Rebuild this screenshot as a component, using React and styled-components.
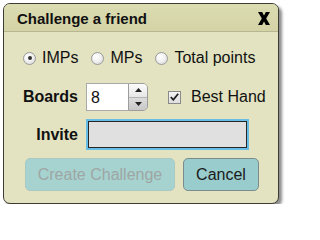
import * as React from 'react';
import styled, { createGlobalStyle } from 'styled-components';

const GlobalStyle = createGlobalStyle`
  html, body {
    margin: 0;
    padding: 0;
    background: #fff;
  }
  body {
    font-family: "Liberation Sans", Arial, sans-serif;
  }
`;

const Dialog = styled.div`
  box-sizing: border-box;
  margin: 3px 0 0 3px;
  width: 276px;
  height: 201px;
  border: 1px solid #3c3c34;
  border-radius: 7px;
  background: #e3e3c1;
  box-shadow: 3px 3px 3px rgba(0, 0, 0, 0.45);
  overflow: hidden;
  display: flex;
  flex-direction: column;
  color: #111;
`;

const Header = styled.div`
  height: 27px;
  flex: none;
  display: flex;
  align-items: center;
  justify-content: space-between;
  padding: 0 8px 0 13px;
  background: linear-gradient(#dcdcb2, #d3d3a6);
  border-bottom: 1px solid #b6b692;
`;

const Title = styled.div`
  font-size: 15px;
  font-weight: bold;
  padding-top: 1px;
`;

const CloseButton = styled.button`
  border: 0;
  background: none;
  padding: 0;
  margin: 2px 0 0;
  width: 12px;
  height: 14px;
  display: flex;
  align-items: center;
  justify-content: center;
  cursor: pointer;
`;

const Body = styled.div`
  display: flex;
  flex-direction: column;
  padding-top: 14px;
`;

const RadioRow = styled.div`
  height: 24px;
  display: flex;
  align-items: center;
  padding-left: 19px;
  font-size: 16px;
`;

const RadioLabel = styled.label`
  display: flex;
  align-items: center;
  gap: 6px;
  margin-right: 13px;
`;

const Radio = styled.input.attrs({ type: 'radio' })`
  appearance: none;
  margin: 0;
  width: 13px;
  height: 13px;
  border-radius: 50%;
  border: 1px solid #9a9a9a;
  background: radial-gradient(circle at 40% 35%, #ffffff 0%, #f1f1f1 45%, #d2d2d2 100%);
  position: relative;
  box-sizing: border-box;
  &:checked::after {
    content: '';
    position: absolute;
    left: 3.5px;
    top: 3.5px;
    width: 4px;
    height: 4px;
    border-radius: 50%;
    background: #333;
  }
`;

const FieldRow = styled.div`
  display: grid;
  grid-template-columns: 74px auto;
  column-gap: 8px;
  align-items: center;
  margin-top: ${p => p.$top}px;
`;

const FieldLabel = styled.label`
  font-size: 16px;
  font-weight: bold;
  text-align: right;
`;

const FieldControls = styled.div`
  display: flex;
  align-items: center;
`;

const NumberBox = styled.input`
  box-sizing: border-box;
  width: 42px;
  height: 28px;
  margin: 0;
  border: 1px solid #a9a9a9;
  border-right: 0;
  background: #fff;
  font: 16px "Liberation Sans", Arial, sans-serif;
  color: #111;
  padding: 2px 0 0 4px;
  outline: none;
`;

const Spinner = styled.div`
  box-sizing: border-box;
  width: 20px;
  height: 28px;
  border: 1px solid #9c9c9c;
  border-radius: 0 5px 5px 0;
  overflow: hidden;
  display: flex;
  flex-direction: column;
`;

const SpinButton = styled.div`
  flex: 1;
  display: flex;
  align-items: center;
  justify-content: center;
  background: ${p => (p.$down ? 'linear-gradient(#dcdcdc, #c8c8c8)' : 'linear-gradient(#fbfbfb, #e6e6e6)')};
  border-top: ${p => (p.$down ? '1px solid #b4b4b4' : '0')};
`;

const CheckLabel = styled.label`
  display: flex;
  align-items: center;
  gap: 10px;
  margin-left: 20px;
  font-size: 16px;
`;

const CheckBox = styled.span`
  box-sizing: border-box;
  width: 13px;
  height: 13px;
  border: 1px solid #8a8a8a;
  background: linear-gradient(#f4f4f4, #dedede);
  display: flex;
  align-items: center;
  justify-content: center;
`;

const TextBox = styled.input`
  box-sizing: border-box;
  width: 163px;
  height: 31px;
  margin: 0;
  border: 2px solid #66bde6;
  box-shadow: inset 0 0 0 1px #262626;
  background: #e0e0e0;
  outline: none;
  font: 16px "Liberation Sans", Arial, sans-serif;
  padding: 0 5px;
`;

const ButtonRow = styled.div`
  display: flex;
  gap: 8px;
  margin-top: 8px;
  padding-left: 21px;
`;

const Button = styled.button`
  box-sizing: border-box;
  width: ${p => p.$w}px;
  height: 33px;
  border-radius: 5px;
  border: 1px solid ${p => (p.disabled ? '#a9c9c5' : '#7a8c8c')};
  background: ${p => (p.disabled ? '#a6d3cf' : '#99cccc')};
  color: ${p => (p.disabled ? '#9ea6a5' : '#1a1a1a')};
  font: 16px "Liberation Sans", Arial, sans-serif;
  padding: 0;
  cursor: ${p => (p.disabled ? 'default' : 'pointer')};
`;

const scoring = ['IMPs', 'MPs', 'Total points'];

export default function App() {
  const [mode, setMode] = React.useState('IMPs');
  return (
    <>
      <GlobalStyle />
      <Dialog>
        <Header>
          <Title>Challenge a friend</Title>
          <CloseButton aria-label="close">
            <svg width="12" height="13" viewBox="0 0 12 13">
              <path d="M0 0 H4.2 L6 3.4 L7.8 0 H12 L8.2 6.5 L12 13 H7.8 L6 9.6 L4.2 13 H0 L3.8 6.5 Z" fill="#000" />
            </svg>
          </CloseButton>
        </Header>
        <Body>
          <RadioRow>
            {scoring.map(s => (
              <RadioLabel key={s}>
                <Radio name="scoring" checked={mode === s} onChange={() => setMode(s)} />
                {s}
              </RadioLabel>
            ))}
          </RadioRow>
          <FieldRow $top={13}>
            <FieldLabel>Boards</FieldLabel>
            <FieldControls>
              <NumberBox defaultValue="8" />
              <Spinner>
                <SpinButton>
                  <svg width="7" height="4" viewBox="0 0 7 4"><path d="M0 4 L3.5 0 L7 4 Z" fill="#222" /></svg>
                </SpinButton>
                <SpinButton $down>
                  <svg width="7" height="4" viewBox="0 0 7 4"><path d="M0 0 L3.5 4 L7 0 Z" fill="#222" /></svg>
                </SpinButton>
              </Spinner>
              <CheckLabel>
                <CheckBox>
                  <svg width="9" height="8" viewBox="0 0 9 8">
                    <path d="M0.8 4 L3.3 6.8 L8.2 0.8" fill="none" stroke="#222" strokeWidth="1.8" />
                  </svg>
                </CheckBox>
                Best Hand
              </CheckLabel>
            </FieldControls>
          </FieldRow>
          <FieldRow $top={8}>
            <FieldLabel>Invite</FieldLabel>
            <FieldControls>
              <TextBox />
            </FieldControls>
          </FieldRow>
          <ButtonRow>
            <Button $w={150} disabled>Create Challenge</Button>
            <Button $w={76}>Cancel</Button>
          </ButtonRow>
        </Body>
      </Dialog>
    </>
  );
}
